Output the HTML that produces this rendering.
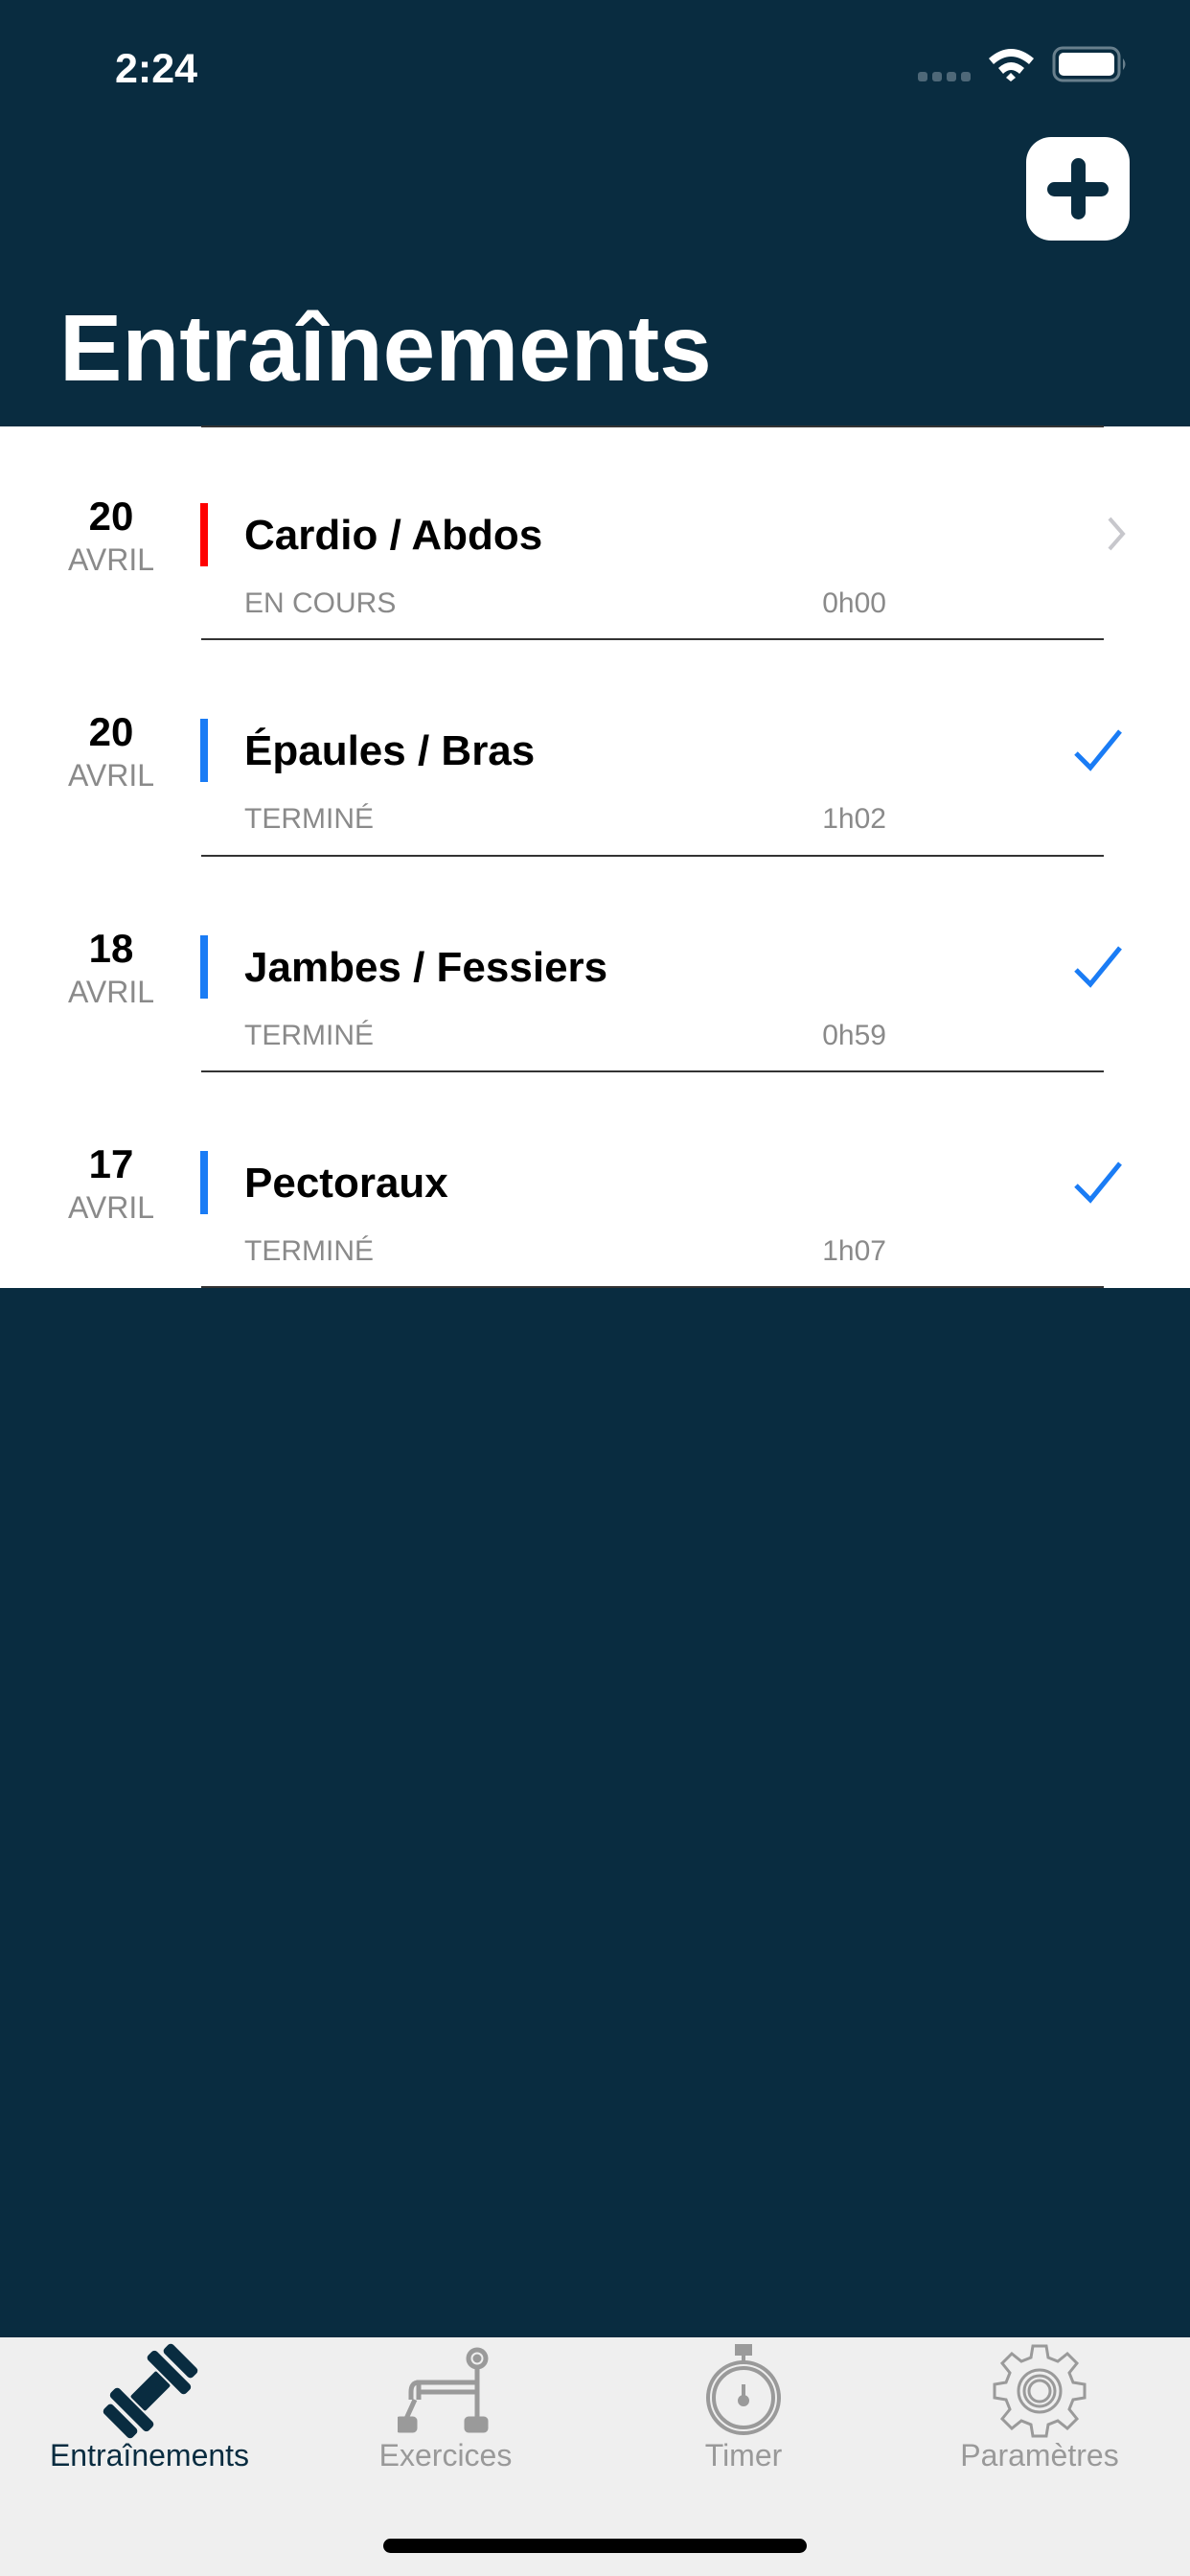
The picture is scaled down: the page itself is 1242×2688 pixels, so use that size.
<!DOCTYPE html>
<html><head><meta charset="utf-8"><style>
*{margin:0;padding:0;box-sizing:border-box}
body{width:1242px;height:2688px;background:#092c40;position:relative;overflow:hidden;font-family:"Liberation Sans",sans-serif}
.a{position:absolute;white-space:nowrap}
.list{position:absolute;left:0;top:445px;width:1242px;height:899px;background:#fff}
.line{position:absolute;left:210px;width:942px;height:2px;background:#333}
.d{position:absolute;width:120px;left:56px;text-align:center;line-height:1}
.tab{position:absolute;top:2439px;left:0;width:1242px;height:249px;background:#efefef}
.lbl{position:absolute;top:2546px;font-size:32px;line-height:1;color:#999;text-align:center;width:300px}
</style></head><body>
<div class="a" style="left:120px;top:51px;font-size:43px;line-height:1;color:#fff;font-weight:bold">2:24</div>
<svg class="a" style="left:950px;top:45px" width="240" height="45">
<g fill="#4e6878"><rect x="8" y="30" width="10" height="10" rx="3"/><rect x="23" y="30" width="10" height="10" rx="3"/><rect x="38" y="30" width="10" height="10" rx="3"/><rect x="53" y="30" width="10" height="10" rx="3"/></g>
<path d="M82 16 Q105 -4 129 16 L124 22 Q105 6 87 22Z M92 26 Q105 14 119 26 L114 32 Q105 24 97 32Z M100 36 L105 31 L110 36 L105 40Z" fill="#fff"/>
<rect x="150" y="5" width="68" height="34" rx="9" fill="none" stroke="#687f8c" stroke-width="3"/>
<rect x="155" y="10" width="58" height="24" rx="5" fill="#fff"/>
<path d="M222 16 Q227 22 222 28Z" fill="#687f8c"/>
</svg>
<div class="a" style="left:1071px;top:143px;width:108px;height:108px;background:#fff;border-radius:26px"></div>
<div class="a" style="left:1118px;top:165px;width:15px;height:64px;background:#092c40;border-radius:8px"></div>
<div class="a" style="left:1093px;top:190px;width:64px;height:15px;background:#092c40;border-radius:8px"></div>
<div class="a" style="left:62px;top:314px;font-size:98px;line-height:1;color:#fff;font-weight:bold">Entraînements</div>

<div class="list"></div>
<div class="line" style="top:444px"></div>

<div class="d" style="top:518px;font-size:42px;font-weight:bold;color:#000">20</div>
<div class="d" style="top:568px;font-size:32px;color:#8a8a8a">AVRIL</div>
<div class="a" style="left:209px;top:525px;width:8px;height:66px;background:#ff0000"></div>
<div class="a" style="left:255px;top:537px;font-size:44px;line-height:1;font-weight:bold;color:#000">Cardio / Abdos</div>
<div class="a" style="left:255px;top:615px;font-size:30px;line-height:1;color:#8a8a8a">EN COURS</div>
<div class="a" style="left:725px;width:200px;text-align:right;top:615px;font-size:30px;line-height:1;color:#8a8a8a">0h00</div>
<svg class="a" style="left:1150px;top:535px" width="30" height="44"><path d="M8 6 L22 22 L8 38" fill="none" stroke="#c7c7cc" stroke-width="4"/></svg>
<div class="line" style="top:666px"></div>

<div class="d" style="top:743px;font-size:42px;font-weight:bold;color:#000">20</div>
<div class="d" style="top:793px;font-size:32px;color:#8a8a8a">AVRIL</div>
<div class="a" style="left:209px;top:750px;width:8px;height:66px;background:#1a7cf5"></div>
<div class="a" style="left:255px;top:762px;font-size:44px;line-height:1;font-weight:bold;color:#000">Épaules / Bras</div>
<div class="a" style="left:255px;top:840px;font-size:30px;line-height:1;color:#8a8a8a">TERMINÉ</div>
<div class="a" style="left:725px;width:200px;text-align:right;top:840px;font-size:30px;line-height:1;color:#8a8a8a">1h02</div>
<svg class="a" style="left:1118px;top:758px" width="56" height="50"><path d="M5 28 L20 43 L51 5" fill="none" stroke="#1a7cf5" stroke-width="5"/></svg>
<div class="line" style="top:892px"></div>

<div class="d" style="top:969px;font-size:42px;font-weight:bold;color:#000">18</div>
<div class="d" style="top:1019px;font-size:32px;color:#8a8a8a">AVRIL</div>
<div class="a" style="left:209px;top:976px;width:8px;height:66px;background:#1a7cf5"></div>
<div class="a" style="left:255px;top:988px;font-size:44px;line-height:1;font-weight:bold;color:#000">Jambes / Fessiers</div>
<div class="a" style="left:255px;top:1066px;font-size:30px;line-height:1;color:#8a8a8a">TERMINÉ</div>
<div class="a" style="left:725px;width:200px;text-align:right;top:1066px;font-size:30px;line-height:1;color:#8a8a8a">0h59</div>
<svg class="a" style="left:1118px;top:984px" width="56" height="50"><path d="M5 28 L20 43 L51 5" fill="none" stroke="#1a7cf5" stroke-width="5"/></svg>
<div class="line" style="top:1117px"></div>

<div class="d" style="top:1194px;font-size:42px;font-weight:bold;color:#000">17</div>
<div class="d" style="top:1244px;font-size:32px;color:#8a8a8a">AVRIL</div>
<div class="a" style="left:209px;top:1201px;width:8px;height:66px;background:#1a7cf5"></div>
<div class="a" style="left:255px;top:1213px;font-size:44px;line-height:1;font-weight:bold;color:#000">Pectoraux</div>
<div class="a" style="left:255px;top:1291px;font-size:30px;line-height:1;color:#8a8a8a">TERMINÉ</div>
<div class="a" style="left:725px;width:200px;text-align:right;top:1291px;font-size:30px;line-height:1;color:#8a8a8a">1h07</div>
<svg class="a" style="left:1118px;top:1209px" width="56" height="50"><path d="M5 28 L20 43 L51 5" fill="none" stroke="#1a7cf5" stroke-width="5"/></svg>
<div class="line" style="top:1342px"></div>

<div class="tab"></div>
<svg class="a" style="left:95px;top:2440px" width="120" height="110">
<g fill="#092c40" transform="translate(62,55) rotate(-45)">
<rect x="-19" y="-11" width="38" height="22" rx="2"/>
<rect x="21" y="-28" width="13" height="56" rx="4"/>
<rect x="38" y="-21" width="13" height="42" rx="4"/>
<rect x="-34" y="-28" width="13" height="56" rx="4"/>
<rect x="-51" y="-21" width="13" height="42" rx="4"/>
</g></svg>
<svg class="a" style="left:415px;top:2446px" width="100" height="96" fill="none" stroke="#9a9a9a" stroke-width="5">
<circle cx="83" cy="15" r="9"/><circle cx="83" cy="15" r="2" fill="#9a9a9a"/>
<path d="M83 24 V80"/><rect x="72" y="78" width="20" height="12" rx="2" fill="#9a9a9a"/>
<path d="M22 40 H83 V50 H22 Z M22 40 Q14 40 14 50 V58 M22 50 V58"/>
<path d="M18 58 L8 80"/><rect x="0" y="78" width="18" height="12" rx="2" fill="#9a9a9a"/>
</svg>
<svg class="a" style="left:735px;top:2446px" width="82" height="98" fill="none" stroke="#9a9a9a" stroke-width="4">
<rect x="34" y="2" width="14" height="8" fill="#9a9a9a"/><path d="M41 10 V18"/>
<circle cx="41" cy="56" r="37"/><circle cx="41" cy="56" r="31"/>
<path d="M41 42 V58" stroke-width="4"/><circle cx="41" cy="59" r="4" fill="#9a9a9a"/>
</svg>
<svg class="a" style="left:1036px;top:2446px" width="98" height="98" fill="none" stroke="#9a9a9a" stroke-width="3">
<path d="M42 2 H56 L58 14 L68 18 L78 10 L88 20 L80 30 L84 40 L96 42 V56 L84 58 L80 68 L88 78 L78 88 L68 80 L58 84 L56 96 H42 L40 84 L30 80 L20 88 L10 78 L18 68 L14 58 L2 56 V42 L14 40 L18 30 L10 20 L20 10 L30 18 L40 14 Z"/>
<circle cx="49" cy="49" r="22"/><circle cx="49" cy="49" r="16"/><circle cx="49" cy="49" r="11"/>
</svg>
<div class="lbl" style="left:6px;color:#092c40">Entraînements</div>
<div class="lbl" style="left:315px">Exercices</div>
<div class="lbl" style="left:626px">Timer</div>
<div class="lbl" style="left:935px">Paramètres</div>
<div class="a" style="left:400px;top:2649px;width:442px;height:15px;background:#000;border-radius:8px"></div>
</body></html>
